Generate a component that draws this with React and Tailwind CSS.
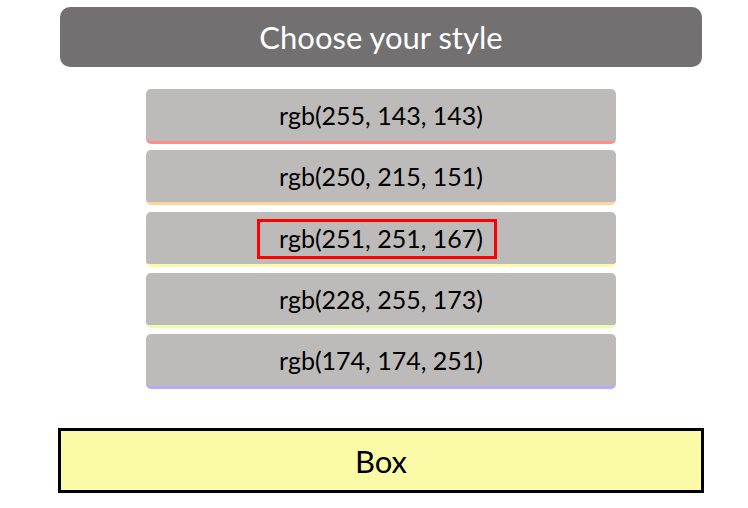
const styles = [
  { color: "rgb(255, 143, 143)", border: "border-[#ff8f8f]" },
  { color: "rgb(250, 215, 151)", border: "border-[#fad797]" },
  { color: "rgb(251, 251, 167)", border: "border-[#fbfba7]", selected: true },
  { color: "rgb(228, 255, 173)", border: "border-[#e4ffad]" },
  { color: "rgb(174, 174, 251)", border: "border-[#aeaefb]" },
];

function StyleButton({ color, border, selected }) {
  return (
    <button
      type="button"
      className={`relative flex h-[55px] w-full items-center justify-center rounded-[5px] border-b-3 bg-[#bdbbb9] text-[25px] leading-8 text-black ${border}`}
    >
      {color}
      {selected && (
        <span className="absolute top-[7px] left-1/2 -ml-[124px] h-10 w-60 border-3 border-[#ff0000]" />
      )}
    </button>
  );
}

export default function App() {
  return (
    <main className="bg-white pt-[7px] pr-11 pb-4 pl-[58px] font-['Gill_Sans_MT','Gill_Sans',Lato,sans-serif]">
      <h1 className="mx-0.5 flex h-[60px] items-center justify-center rounded-[10px] bg-[#737071] text-[31px] leading-10 text-white">
        Choose your style
      </h1>
      <div className="mx-auto mt-[22px] flex h-[300px] max-w-[470px] flex-col justify-between">
        {styles.map((style) => (
          <StyleButton key={style.color} {...style} />
        ))}
      </div>
      <div className="mt-[39px] flex h-[65px] items-center justify-center border-3 border-black bg-[#fbfba7] text-[31px] leading-10 text-black">
        Box
      </div>
    </main>
  );
}
